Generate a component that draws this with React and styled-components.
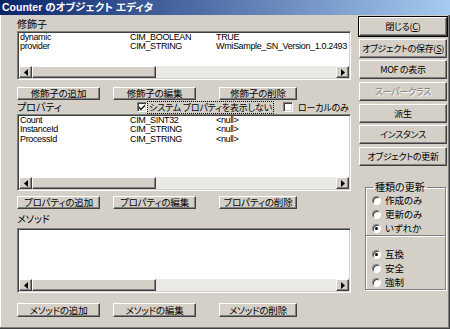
import React from 'react';
import styled, { createGlobalStyle, css } from 'styled-components';

const GlobalStyle = createGlobalStyle`
  html, body {
    margin: 0;
    padding: 0;
    background: #d4d0c8;
  }
  body {
    font-family: "Noto Sans CJK JP", "Liberation Sans", sans-serif;
    font-feature-settings: "palt";
    color: #000;
    white-space: nowrap;
  }
`;

const Window = styled.div`
  width: 450px;
  height: 329px;
  box-sizing: border-box;
  background: #d4d0c8;
  display: flex;
  flex-direction: column;
  overflow: hidden;
  box-shadow: inset -1px -1px 0 #404040, inset -2px -2px 0 #808080, inset 1px 0 0 #fff;
  padding-bottom: 2px;
`;

const TitleBar = styled.div`
  height: 15px;
  flex: none;
  display: flex;
  align-items: center;
  padding-left: 2px;
  background: linear-gradient(to right, #0a246a, #a6caf0);
  color: #fff;
  font-family: "Liberation Sans", "Noto Sans CJK JP", sans-serif;
  font-weight: bold;
  font-size: 10.5px;
  line-height: 15px;
`;

const Body = styled.div`
  display: flex;
  gap: 8px;
  padding: 2px 0 0 17px;
`;

const LeftCol = styled.div`
  width: 334px;
  flex: none;
  display: flex;
  flex-direction: column;
`;

const RightCol = styled.div`
  width: 88px;
  flex: none;
  display: flex;
  flex-direction: column;
`;

const SectionLabel = styled.div`
  height: ${({ $h }) => $h}px;
  display: flex;
  align-items: flex-end;
  padding-bottom: ${({ $pb }) => $pb || 0}px;
  box-sizing: border-box;
  font-size: 10px;
  line-height: 12px;
`;

const ListBox = styled.div`
  height: ${({ $h }) => $h}px;
  box-sizing: border-box;
  background: #fff;
  border: 1px solid;
  border-color: #808080 #fff #fff #808080;
  box-shadow: inset 1px 1px 0 #404040, inset -1px -1px 0 #d4d0c8;
  padding: 1px;
  display: flex;
  flex-direction: column;
`;

const Rows = styled.div`
  flex: 1;
  padding-left: 1px;
  overflow: hidden;
`;

const Row = styled.div`
  display: grid;
  grid-template-columns: 110px 86px auto;
  font-family: "Liberation Sans", "DejaVu Sans", sans-serif;
  font-size: 9px;
  line-height: 9.4px;
  letter-spacing: -0.35px;
`;

const HScroll = styled.div`
  height: 12px;
  display: flex;
  flex: none;
`;

const raised = css`
  box-sizing: border-box;
  background: #d4d0c8;
  border: 1px solid;
  border-color: #fff #404040 #404040 #fff;
  box-shadow: inset -1px -1px 0 #808080;
`;

const ScrollArrow = styled.div`
  ${raised};
  width: 13px;
  display: flex;
  align-items: center;
  justify-content: center;
`;

const Thumb = styled.div`
  ${raised};
  width: 124px;
`;

const Track = styled.div`
  flex: 1;
  background: #ebe9e5;
`;

const ButtonRow = styled.div`
  display: flex;
  height: ${({ $h }) => $h}px;
  margin-top: ${({ $mt }) => $mt}px;
`;

const ActionButton = styled.div`
  ${raised};
  width: ${({ $w }) => $w}px;
  margin-left: ${({ $ml }) => $ml || 0}px;
  display: flex;
  align-items: center;
  justify-content: center;
  font-size: 9.5px;
  line-height: 11px;
  letter-spacing: -0.2px;
`;

const SideButton = styled.div`
  ${raised};
  height: 19px;
  margin-bottom: 2.65px;
  display: flex;
  align-items: center;
  justify-content: center;
  font-size: 9px;
  line-height: 11px;
  letter-spacing: -0.3px;
  color: ${({ $disabled }) => ($disabled ? '#808080' : '#000')};
  text-shadow: ${({ $disabled }) => ($disabled ? '1px 1px 0 #fff' : 'none')};
  ${({ $default }) =>
    $default &&
    css`
      outline: 1px solid #000;
    `}
`;

const PropHeader = styled.div`
  height: 14px;
  display: flex;
  align-items: center;
  font-size: 10px;
  line-height: 12px;
`;

const PropLabel = styled.span`
  width: 120px;
  flex: none;
`;

const CheckItem = styled.label`
  display: flex;
  align-items: center;
  flex: none;
  margin-left: ${({ $ml }) => $ml || 0}px;
`;

const CheckBox = styled.span`
  width: 10px;
  height: 10px;
  flex: none;
  box-sizing: border-box;
  background: #fff;
  border: 1px solid;
  border-color: #808080 #fff #fff #808080;
  box-shadow: inset 1px 1px 0 #404040, inset -1px -1px 0 #d4d0c8;
  display: flex;
  align-items: center;
  justify-content: center;
`;

const CheckText = styled.span`
  margin-left: ${({ $focus }) => ($focus ? 1 : 4)}px;
  padding: 0 1px;
  font-size: 9px;
  line-height: 11px;
  letter-spacing: -0.2px;
  ${({ $focus }) =>
    $focus &&
    css`
      outline: 1px dotted #000;
    `}
`;

const GroupBox = styled.fieldset`
  margin: 13px 1px 0 6px;
  padding: 0 6px;
  border: 1px solid #808080;
  box-shadow: 1px 1px 0 #fff, inset 1px 1px 0 #fff;
  height: 109px;
  box-sizing: border-box;
`;

const Legend = styled.legend`
  font-size: 10px;
  line-height: 12px;
  padding: 0 2px;
  margin-left: 1px;
`;

const RadioRow = styled.div`
  height: 14px;
  display: flex;
  align-items: center;
  font-size: 9.5px;
  line-height: 12px;
`;

const RadioCircle = styled.span`
  width: 9px;
  height: 9px;
  flex: none;
  box-sizing: border-box;
  border-radius: 50%;
  background: #fff;
  border: 1px solid;
  border-color: #808080 #fff #fff #808080;
  box-shadow: inset 1px 1px 0 #404040;
  display: flex;
  align-items: center;
  justify-content: center;
  margin-right: 4px;
  &::after {
    content: '';
    width: 3px;
    height: 3px;
    border-radius: 50%;
    background: ${({ $on }) => ($on ? '#000' : 'transparent')};
  }
`;

const Separator = styled.div`
  margin: 0 -6px 10px;
  height: 0;
  border-top: 1px solid #808080;
  border-bottom: 1px solid #fff;
`;

const Arrow = ({ dir }) => (
  <svg width="4" height="7" viewBox="0 0 4 7">
    {dir === 'left' ? <path d="M4 0 L0 3.5 L4 7 Z" fill="#000" /> : <path d="M0 0 L4 3.5 L0 7 Z" fill="#000" />}
  </svg>
);

const Check = () => (
  <svg width="8" height="8" viewBox="0 0 8 8">
    <path d="M1 3.5 L3 5.5 L7 1.5 L7 3.3 L3 7.3 L1 5.3 Z" fill="#000" />
  </svg>
);

const List = ({ h, rows }) => (
  <ListBox $h={h}>
    <Rows>
      {rows.map((r) => (
        <Row key={r[0]}>
          <span>{r[0]}</span>
          <span>{r[1]}</span>
          <span>{r[2]}</span>
        </Row>
      ))}
    </Rows>
    <HScroll>
      <ScrollArrow>
        <Arrow dir="left" />
      </ScrollArrow>
      <Thumb />
      <Track />
      <ScrollArrow>
        <Arrow dir="right" />
      </ScrollArrow>
    </HScroll>
  </ListBox>
);

const qualifiers = [
  ['dynamic', 'CIM_BOOLEAN', 'TRUE'],
  ['provider', 'CIM_STRING', 'WmiSample_SN_Version_1.0.2493'],
];

const properties = [
  ['Count', 'CIM_SINT32', '<null>'],
  ['InstanceId', 'CIM_STRING', '<null>'],
  ['ProcessId', 'CIM_STRING', '<null>'],
];

const Buttons = ({ labels, h, mt }) => (
  <ButtonRow $h={h} $mt={mt}>
    <ActionButton $w={83}>{labels[0]}</ActionButton>
    <ActionButton $w={83} $ml={13}>{labels[1]}</ActionButton>
    <ActionButton $w={78} $ml={23}>{labels[2]}</ActionButton>
  </ButtonRow>
);

const App = () => {
  return (
    <>
      <GlobalStyle />
      <Window>
        <TitleBar>Counter のオブジェクト エディタ</TitleBar>
        <Body>
          <LeftCol>
            <SectionLabel $h={14} $pb={1}>修飾子</SectionLabel>
            <List h={49} rows={qualifiers} />
            <Buttons labels={['修飾子の追加', '修飾子の編集', '修飾子の削除']} h={13} mt={7} />
            <PropHeader>
              <PropLabel>プロパティ</PropLabel>
              <CheckItem>
                <CheckBox>
                  <Check />
                </CheckBox>
                <CheckText $focus>システム プロパティを表示しない</CheckText>
              </CheckItem>
              <CheckItem $ml={10}>
                <CheckBox />
                <CheckText>ローカルのみ</CheckText>
              </CheckItem>
            </PropHeader>
            <List h={77} rows={properties} />
            <Buttons labels={['プロパティの追加', 'プロパティの編集', 'プロパティの削除']} h={13} mt={5} />
            <SectionLabel $h={19} $pb={3}>メソッド</SectionLabel>
            <List h={65} rows={[]} />
            <Buttons labels={['メソッドの追加', 'メソッドの編集', 'メソッドの削除']} h={14} mt={10} />
          </LeftCol>
          <RightCol>
            <SideButton $default>
              閉じる(<u>C</u>)
            </SideButton>
            <SideButton>
              オブジェクトの保存(<u>S</u>)
            </SideButton>
            <SideButton>MOF の表示</SideButton>
            <SideButton $disabled>スーパークラス</SideButton>
            <SideButton>派生</SideButton>
            <SideButton>インスタンス</SideButton>
            <SideButton>オブジェクトの更新</SideButton>
            <GroupBox>
              <Legend>種類の更新</Legend>
              <RadioRow>
                <RadioCircle />
                作成のみ
              </RadioRow>
              <RadioRow>
                <RadioCircle />
                更新のみ
              </RadioRow>
              <RadioRow>
                <RadioCircle $on />
                いずれか
              </RadioRow>
              <Separator />
              <RadioRow>
                <RadioCircle $on />
                互換
              </RadioRow>
              <RadioRow>
                <RadioCircle />
                安全
              </RadioRow>
              <RadioRow>
                <RadioCircle />
                強制
              </RadioRow>
            </GroupBox>
          </RightCol>
        </Body>
      </Window>
    </>
  );
};

export default App;
